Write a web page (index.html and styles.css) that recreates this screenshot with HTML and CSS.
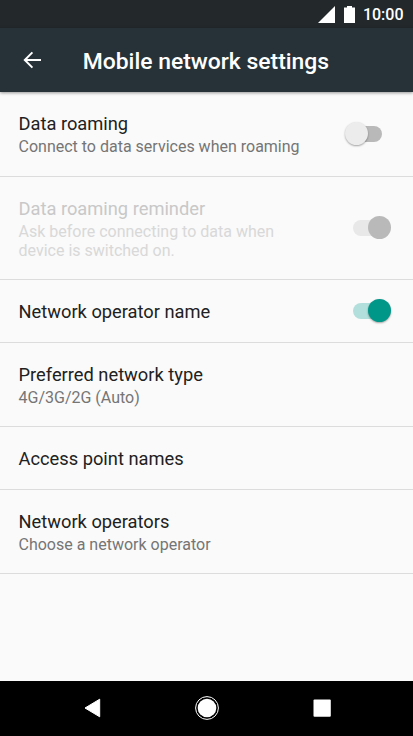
FILE: index.html
```html
<!DOCTYPE html>
<html lang="en">
  <head>
    <meta charset="UTF-8" />
    <title>Mobile network settings</title>
    <link rel="stylesheet" href="styles.css">
  </head>
  <body>
    <div class="status-bar">
      <svg class="signal" viewBox="0 0 17 17"><path d="M17 0V17H0Z" /></svg>
      <svg class="battery" viewBox="0 0 11 17"><path d="M3 0H8V1.5H11V17H0V1.5H3Z" /></svg>
      <span class="clock">10:00</span>
    </div>

    <header class="app-bar">
      <svg class="back" viewBox="0 0 24 24"><path d="M21 11H7.2l5.9-5.9L11.7 3.7 3.4 12l8.3 8.3 1.4-1.4L7.2 13H21z" /></svg>
      <h1>Mobile network settings</h1>
    </header>

    <main class="settings">
      <div class="row two-line">
        <div class="text">
          <h2>Data roaming</h2>
          <p>Connect to data services when roaming</p>
        </div>
        <span class="switch off"></span>
      </div>
      <div class="row three-line disabled">
        <div class="text">
          <h2>Data roaming reminder</h2>
          <p>Ask before connecting to data when<br>device is switched on.</p>
        </div>
        <span class="switch on"></span>
      </div>
      <div class="row">
        <div class="text">
          <h2>Network operator name</h2>
        </div>
        <span class="switch on"></span>
      </div>
      <div class="row two-line">
        <div class="text">
          <h2>Preferred network type</h2>
          <p>4G/3G/2G (Auto)</p>
        </div>
      </div>
      <div class="row">
        <div class="text">
          <h2>Access point names</h2>
        </div>
      </div>
      <div class="row two-line">
        <div class="text">
          <h2>Network operators</h2>
          <p>Choose a network operator</p>
        </div>
      </div>
    </main>

    <nav class="nav-bar">
      <svg viewBox="0 0 24 24"><path class="triangle" d="M5 12L19.7 3.2V20.8Z" /></svg>
      <svg viewBox="0 0 24 24"><circle cx="12" cy="12" r="9.3" /><circle class="ring" cx="12" cy="12" r="11.4" /></svg>
      <svg viewBox="0 0 24 24"><rect x="3.5" y="3.5" width="17.3" height="17.3" rx="1" /></svg>
    </nav>
  </body>
</html>
```
FILE: styles.css
```css
body {
  margin: 0;
  height: 736px;
  display: flex;
  flex-direction: column;
  overflow: hidden;
  font-family: Roboto, sans-serif;
  background-color: #fafafa;
  color: #212121;
}

h1,
h2,
p {
  margin: 0;
  font-weight: 400;
  white-space: nowrap;
}

svg {
  display: block;
  fill: #fff;
  overflow: visible;
}

.status-bar {
  display: flex;
  align-items: center;
  justify-content: flex-end;
  height: 28px;
  padding-right: 9.5px;
  background-color: #23282b;
  color: #fff;
}

.signal {
  width: 17px;
  height: 17px;
  margin-right: 9px;
}

.battery {
  width: 11px;
  height: 17px;
  margin-right: 8px;
}

.clock {
  font-size: 16px;
  font-weight: 500;
}

.app-bar {
  display: flex;
  align-items: center;
  height: 64px;
  padding-left: 20px;
  background-color: #263238;
  color: #fff;
  box-shadow: 0 1px 3px rgba(0, 0, 0, 0.4);
}

.back {
  width: 24px;
  height: 24px;
  margin-right: 38.7px;
}

.app-bar h1 {
  padding-top: 3px;
  font-size: 22.9px;
  font-weight: 500;
  line-height: 30px;
}

.settings {
  flex: 1;
}

.row {
  box-sizing: border-box;
  display: flex;
  align-items: center;
  justify-content: space-between;
  height: 62.5px;
  padding: 0 31px 0 18.5px;
  border-bottom: 1px solid #dcdcdc;
}

.two-line {
  height: 84.5px;
}

.three-line {
  height: 103.5px;
}

.row h2 {
  padding-top: 2px;
  font-size: 18.3px;
  line-height: 24px;
}

.row p {
  margin-top: 1px;
  padding-bottom: 0.6px;
  font-size: 16px;
  line-height: 19px;
  color: #757575;
}

.disabled h2 {
  color: #c8c8c8;
}

.disabled p {
  color: #d8d8d8;
}

/* track with the round thumb on top */
.switch {
  position: relative;
  width: 29px;
  height: 16px;
  border-radius: 8px;
  background-color: #b9b9b9;
}

.switch::after {
  content: "";
  position: absolute;
  top: -3.5px;
  left: -8.5px;
  width: 23px;
  height: 23px;
  border-radius: 50%;
  background-color: #ececec;
  box-shadow: 0 1px 2px rgba(0, 0, 0, 0.35);
}

.switch.on {
  background-color: #b2dfdb;
}

.switch.on::after {
  left: 14.5px;
  background-color: #009688;
}

.disabled .switch {
  background-color: #e8e8e8;
}

.disabled .switch::after {
  background-color: #b9b9b9;
  box-shadow: none;
}

.nav-bar {
  display: flex;
  align-items: center;
  justify-content: center;
  gap: 91px;
  box-sizing: border-box;
  height: 55px;
  padding-bottom: 1px;
  background-color: #000;
}

.nav-bar svg {
  width: 24px;
  height: 24px;
}

.nav-bar .triangle {
  stroke: #fff;
  stroke-width: 1;
  stroke-linejoin: round;
}

.nav-bar .ring {
  fill: none;
  stroke: #fff;
  stroke-width: 1;
}
```
